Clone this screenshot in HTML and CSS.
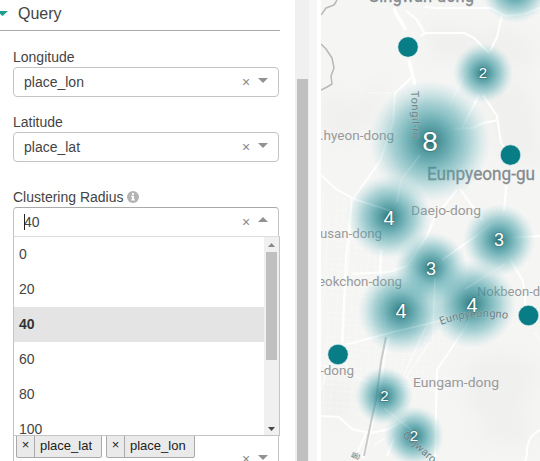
FILE: index.html
```html
<!DOCTYPE html>
<html lang="en">
<head>
<meta charset="utf-8">
<title>Query</title>
<link rel="stylesheet" href="styles.css">
</head>
<body>
<div class="app">
  <section class="panel">
    <header class="section-head"><span class="caret"></span><h1>Query</h1></header>
    <div class="field">
      <label>Longitude</label>
      <div class="select"><span class="value">place_lon</span><span class="clear">×</span><span class="arrow"></span></div>
    </div>
    <div class="field latitude">
      <label>Latitude</label>
      <div class="select"><span class="value">place_lat</span><span class="clear">×</span><span class="arrow"></span></div>
    </div>
    <div class="field radius">
      <label>Clustering Radius
        <svg class="info" viewBox="0 0 12 12"><circle cx="6" cy="6" r="6" fill="#b3b3b3"/><path d="M5 2h2v1.700H5zM4.200 4.800H7v3.500h.9v1.300H4.200V8.300H5V6.100h-.8z" fill="#fff"/></svg>
      </label>
      <div class="select open"><span class="value"><i class="cursor"></i>40</span><span class="clear">×</span><span class="arrow up"></span></div>
      <div class="menu">
        <ul class="options">
          <li>0</li><li>20</li><li class="selected">40</li><li>60</li><li>80</li><li>100</li>
        </ul>
        <div class="menu-scroll"><span class="step up"></span><span class="menu-thumb"></span><span class="step down"></span></div>
      </div>
    </div>
    <div class="multi">
      <div class="tags">
        <span class="tag"><b>×</b><span>place_lat</span></span>
        <span class="tag"><b>×</b><span>place_lon</span></span>
      </div>
      <div class="multi-controls"><span class="clear">×</span><span class="arrow"></span></div>
    </div>
  </section>
  <div class="scrollbar"><div class="thumb"></div></div>
  <div class="gutter"></div>
  <svg class="map" viewBox="321 0 219 461">
    <defs>
      <radialGradient id="heat">
        <stop offset="0" stop-color="#16656b" stop-opacity=".95"/>
        <stop offset=".12" stop-color="#2b7f85" stop-opacity=".87"/>
        <stop offset=".35" stop-color="#35929a" stop-opacity=".7"/>
        <stop offset=".62" stop-color="#45a2aa" stop-opacity=".44"/>
        <stop offset=".85" stop-color="#60b3ba" stop-opacity=".16"/>
        <stop offset="1" stop-color="#7cc3c8" stop-opacity="0"/>
      </radialGradient>
      <pattern id="blocks" width="7" height="6" patternUnits="userSpaceOnUse" patternTransform="rotate(4)">
        <path d="M0 0H7M0 0V6" class="block-line"/>
      </pattern>
      <filter id="soft" x="-30%" y="-30%" width="160%" height="160%"><feGaussianBlur stdDeviation="9"/></filter>
    </defs>
    <rect x="321" width="219" height="461" fill="#f5f5f4"/>
    <g class="terrain" filter="url(#soft)">
      <path d="M430 20l45 12 40-5 25 26-20 22-55-14-37-2zM322 90l34 14 29-30-7 45-34 25-22-14zM480 75l50 12 15 80-45-7z"/>
      <path d="M465 365l34-14 43 19-20 42-27 17-31-25zM322 378l32 3-3 30-29 9zM470 435l38-19 29 7-14 24z"/>
    </g>
    <path d="M321 190l35 10 16 40 70 40 15 40-30 50-25 40h-81z" fill="url(#blocks)"/>
    <g class="roads minor">
      <path d="M352 200l-3 56-4 44-2 45M381 249v30l5 50M435 278l-2 60M321 365l7 2M335 352l20 24 16 8M404 192l-2 26M534 332l6 8M467 70l-17 35M396 385l40 6M321 390l7-23M386 437l-12 8M404 10l16 12 5 12"/>
      <path d="M391 93l-22 0M430 342l-25 37M427 325l-24 52"/>
    </g>
    <g class="roads">
      <path d="M394 8l2 5 10 17" stroke-width="3.500"/>
      <path d="M409 60l6 25" stroke-width="3.500"/>
      <path d="M407 11l9 8 9 15M420 36l6-3h38l10 5 15 15M502 15l-5 22-7 14M425 7l12 1h54l15 8 18-2 16-6"/>
      <path d="M412 77l-17 16-2 30-13 38-27 38M321 175l15 14 18 10 37 12"/>
      <path d="M479 95l-17 33M483 95l14 21 4 27 8 10M498 120l-15 3-10 5-19 1M507 177l-3 34M460 189l10 14 13 18M457 190l-22 27-8 19-20 30-18 6-37 2M442 260l34-24 15-12M505 238l35-2M510 259l13 22 3 28M381 250l-1 24M352 198l-6 60-4 85"/>
      <path d="M345 345l48-13 51-12M468 323l-19 29-12 18-2 90M321 416l18 1 13 12 18 4 16-3 20-10M366 433l-12 28M540 430q-14 7-13 25l-2 6M394 438l-7 18"/>
    </g>
    <path class="boundary" d="M337 0l-3 5-8 3-5 7M321 44l5 5 6 9 2 10-3 8 1 8-5 3-6 3"/>
    <path d="M389 337l-5 18-6 45-6 22-9 36" class="roads rail-edge"/>
    <path d="M386 337l-5 25-5 38-5 22-7 34" class="rail"/>
    <g class="labels">
      <text x="368" y="2" class="district" textLength="106" lengthAdjust="spacingAndGlyphs">Gingwan-dong</text>
      <text x="320" y="140" textLength="74" lengthAdjust="spacingAndGlyphs">.hyeon-dong</text>
      <text x="427" y="180" class="district" textLength="108" lengthAdjust="spacingAndGlyphs">Eunpyeong-gu</text>
      <text x="411" y="215" textLength="70" lengthAdjust="spacingAndGlyphs">Daejo-dong</text>
      <text x="320" y="238" textLength="62" lengthAdjust="spacingAndGlyphs">usan-dong</text>
      <text x="318" y="286" textLength="84" lengthAdjust="spacingAndGlyphs">eokchon-dong</text>
      <text x="477" y="296" textLength="85" lengthAdjust="spacingAndGlyphs">Nokbeon-dong</text>
      <text x="320" y="375" textLength="34" lengthAdjust="spacingAndGlyphs">-dong</text>
      <text x="413" y="387" textLength="86" lengthAdjust="spacingAndGlyphs">Eungam-dong</text>
    </g>
    <g fill="url(#heat)">
      <circle cx="515" cy="-11" r="34"/><circle cx="483" cy="73" r="30"/><circle cx="430" cy="141" r="61"/>
      <circle cx="389" cy="217" r="42"/><circle cx="499" cy="240" r="36"/><circle cx="431" cy="268" r="36"/>
      <circle cx="401" cy="311" r="43"/><circle cx="472" cy="304" r="44"/><circle cx="384" cy="396" r="29"/><circle cx="414" cy="436" r="30"/>
    </g>
    <g class="roads veil"><path d="M420 155l-19 25-4 22M354 199l37 12M442 260l34-24M505 264l-40 25M435 278l-2 45M384 408l30 24M427 325l-14 30M345 345l48-13 51-12"/></g>
    <g class="street">
      <text transform="translate(411 91) rotate(88)" textLength="48">Tongil-ro</text>
      <path id="avenue" d="M441 325q30-12 69-6" fill="none"/>
      <text><textPath href="#avenue" textLength="68">Eunpyeongno</textPath></text>
      <text transform="translate(402 436) rotate(42)" textLength="41">Gajwaro</text>
      <text transform="translate(357 461) rotate(-65)" font-size="9">통</text>
    </g>
    <g class="points"><circle cx="408" cy="47" r="10.200"/><circle cx="510.500" cy="155" r="10.200"/><circle cx="528.500" cy="315.500" r="10.200"/><circle cx="338" cy="354.500" r="10.200"/></g>
    <g class="counts">
      <text x="483" y="78" font-size="15">2</text><text x="430" y="151" font-size="28">8</text>
      <text x="389" y="225" font-size="20">4</text><text x="499" y="246" font-size="18">3</text>
      <text x="431" y="275" font-size="18">3</text><text x="401" y="318" font-size="20">4</text>
      <text x="472" y="312" font-size="20">4</text><text x="384.500" y="401" font-size="15">2</text><text x="414" y="441" font-size="15">2</text>
    </g>
  </svg>
</div>
</body>
</html>
```

FILE: styles.css
```css
* { box-sizing: border-box; }
body { margin: 0; background: #fff; color: #444; font: 14px/20px "Liberation Sans", Arial, sans-serif; overflow: hidden; }
.app { display: flex; width: 540px; height: 461px; overflow: hidden; }
.panel { width: 295px; flex: none; }
.section-head { display: flex; align-items: center; width: 280px; height: 31px; padding-bottom: 2px; border-bottom: 1px solid #aaa; }
.caret { width: 11px; height: 5px; margin: 0 10px 1px -3px; background: #1f9d8d; clip-path: polygon(0 0, 100% 0, 50% 100%); }
h1 { margin: 0; font-size: 16px; font-weight: normal; }
.field { position: relative; width: 266px; margin: 16px 0 0 13px; }
.latitude { margin-top: 15px; }
.radius { margin-top: 25px; }
label { display: flex; align-items: center; height: 20px; gap: 3px; }
.info { width: 12px; height: 12px; }
.select { display: flex; align-items: center; height: 30px; padding: 0 10px; border: 1px solid #c4c4c4; border-radius: 4px; }
.select.open { border-color: #aaa #c4c4c4 #ddd; border-radius: 4px 4px 0 0; }
.value { position: relative; flex: 1; }
.cursor { position: absolute; left: 0; top: 2px; width: 1px; height: 16px; background: #222; }
.clear { width: 10px; margin-right: 7px; text-align: center; color: #888; font-size: 14px; }
.arrow { width: 10px; height: 5px; margin-bottom: 3px; background: #929292; clip-path: polygon(0 0, 100% 0, 50% 100%); }
.arrow.up { margin-bottom: 5px; clip-path: polygon(50% 0, 100% 100%, 0 100%); }
.menu { position: absolute; z-index: 1; top: 49px; left: 0; display: flex; width: 267px; height: 200px; overflow: hidden; background: #fff; border: 1px solid #c4c4c4; border-top-color: #ddd; }
.options { flex: 1; margin: 0; padding: 0; list-style: none; }
.options li { height: 35px; padding: 0 5px; line-height: 35px; }
.options .selected { background: #e4e4e4; color: #333; font-weight: bold; }
.menu-scroll { display: flex; flex-direction: column; align-items: center; width: 15px; background: #f0f0f0; }
.step { width: 7px; height: 4px; background: #888; clip-path: polygon(50% 0, 100% 100%, 0 100%); margin: 6px 0 5px; }
.step.down { background: #444; clip-path: polygon(0 0, 100% 0, 50% 100%); margin: auto 0 4px; }
.menu-thumb { width: 11px; height: 108px; background: #c0c0c0; }
.multi { display: flex; align-items: flex-start; width: 266px; height: 40px; margin: 194px 0 0 13px; padding: 2px; border: 1px solid #c4c4c4; }
.tags { display: flex; flex: 1; gap: 4px; }
.tag { display: flex; width: 86px; height: 24px; color: #222; background: #eaeaea; border: 1px solid #aaa; border-radius: 2px; font-size: 13px; line-height: 21px; }
.tag:last-child { width: 89px; }
.tag b { width: 18px; flex: none; border-right: 1px solid #aaa; font-weight: normal; text-align: center; line-height: 20px; }
.tag > span { padding-left: 5px; }
.multi-controls { display: flex; align-items: center; padding: 15px 8px 0 0; }
.scrollbar { width: 14px; padding: 79px 1px 0 2px; background: #f0f0f0; flex: none; }
.thumb { height: 382px; background: #c0c0c0; }
.gutter { width: 12px; flex: none; background: #f6f6f6; border-right: 4px solid #fff; }
.map { width: 219px; height: 461px; flex: none; }
.terrain { fill: #f0f0ef; }
.block-line { fill: none; stroke: #fff; stroke-width: 1; opacity: .4; }
.roads { fill: none; stroke: #fff; stroke-width: 2; stroke-linejoin: round; }
.roads.minor { stroke-width: 1.2; opacity: .7; }
.roads.veil { stroke-width: 1.5; opacity: .15; }
.roads.rail-edge { stroke-width: 4; opacity: .8; }
.boundary { fill: none; stroke: #b8b8b8; stroke-width: 1.5; stroke-linejoin: round; }
.rail { fill: none; stroke: #cacaca; stroke-width: 2; }
.labels { fill: #999; font: 13.5px Roboto, sans-serif; }
.labels text, .street text { paint-order: stroke; stroke: #fff; stroke-opacity: .25; stroke-width: 1px; }
.labels .district { fill: #858b8e; font-size: 17.5px; }
.labels .district { stroke: #858b8e; stroke-opacity: 1; stroke-width: .3px; }
.street { fill: #6c8185; font: 11px Roboto, "Noto Sans CJK KR", sans-serif; }
.points { fill: #087d86; stroke: #e4f4f4; stroke-width: .6; }
.counts { fill: #fff; text-anchor: middle; font-family: "Liberation Sans", sans-serif; }
.counts text { paint-order: stroke; stroke: #245c61; stroke-opacity: .4; stroke-width: 1.5px; }
```
